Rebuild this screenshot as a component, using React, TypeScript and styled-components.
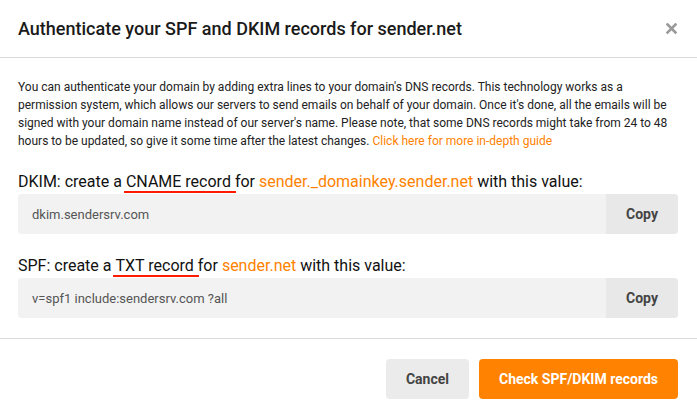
import React from "react";
import styled, { createGlobalStyle } from "styled-components";

const Global = createGlobalStyle`
  html, body { margin: 0; padding: 0; background: #fff; }
  body { font-family: Roboto, "Liberation Sans", Arial, sans-serif; color: #222; }
  * { box-sizing: border-box; }
`;

const Modal = styled.div`
  width: 697px;
  height: 417px;
  background: #fff;
  display: flex;
  flex-direction: column;
`;

const Header = styled.div`
  height: 58px;
  display: flex;
  align-items: center;
  justify-content: space-between;
  padding: 0 18px 1px 18px;
  border-bottom: 1px solid #d9d9d9;
`;

const Title = styled.h2`
  margin: 0;
  font-size: 18px;
  font-weight: 500;
  color: #1a1a1a;
`;

const Close = styled.button`
  border: 0;
  background: none;
  padding: 0;
  width: 14px;
  height: 14px;
  display: flex;
  align-items: center;
  justify-content: center;
  margin-right: 1px;
  cursor: pointer;
`;

const Body = styled.div`
  padding: 20px 19px 20px 18px;
  display: flex;
  flex-direction: column;
  border-bottom: 1px solid #d9d9d9;
`;

const Intro = styled.p`
  margin: 0 0 21px 0;
  font-size: 12px;
  line-height: 18px;
  color: #222;
`;

const Link = styled.a`
  color: #ff8200;
  text-decoration: none;
`;

const Section = styled.div<{ $gap?: number }>`
  display: flex;
  flex-direction: column;
  margin-top: ${(p) => p.$gap ?? 0}px;
`;

const Label = styled.div`
  font-size: 16px;
  line-height: 22px;
  color: #111;
  margin-bottom: 1px;
`;

const Marked = styled.span`
  border-bottom: 2px solid #ff1a00;
  padding: 0 5px 0 2px;
  margin-left: -2px;
  margin-right: -5px;
`;

const Accent = styled.span`
  color: #ff8200;
`;

const Field = styled.div`
  display: flex;
  height: 40px;
  border-radius: 4px;
  overflow: hidden;
  background: #f2f2f2;
`;

const Value = styled.div`
  flex: 1;
  display: flex;
  align-items: center;
  padding-left: 14px;
  font-size: 13px;
  color: #555;
`;

const CopyButton = styled.button`
  width: 72px;
  border: 0;
  background: #e8e8e8;
  font-family: inherit;
  font-size: 14px;
  font-weight: 700;
  color: #444;
  cursor: pointer;
`;

const Footer = styled.div`
  flex: 1;
  display: flex;
  justify-content: flex-end;
  align-items: flex-start;
  gap: 10px;
  padding: 20px 19px 0 18px;
`;

const Button = styled.button<{ $primary?: boolean }>`
  height: 40px;
  border: 0;
  border-radius: 4px;
  padding: 0 20px;
  font-family: inherit;
  font-size: 14px;
  font-weight: 700;
  background: ${(p) => (p.$primary ? "#ff8200" : "#ebebeb")};
  color: ${(p) => (p.$primary ? "#fff" : "#444")};
  cursor: pointer;
`;

export default function App() {
  return (
    <>
      <Global />
      <Modal>
        <Header>
          <Title>Authenticate your SPF and DKIM records for sender.net</Title>
          <Close aria-label="Close">
            <svg width="11" height="11" viewBox="0 0 11 11">
              <path d="M1.5 1.5 L9.5 9.5 M9.5 1.5 L1.5 9.5" stroke="#999" strokeWidth="2.6" strokeLinecap="square" />
            </svg>
          </Close>
        </Header>
        <Body>
          <Intro>
            You can authenticate your domain by adding extra lines to your domain's DNS records. This technology works as a
            permission system, which allows our servers to send emails on behalf of your domain. Once it's done, all the emails will be
            signed with your domain name instead of our server's name. Please note, that some DNS records might take from 24 to 48
            hours to be updated, so give it some time after the latest changes. <Link href="#">Click here for more in-depth guide</Link>
          </Intro>
          <Section>
            <Label>
              DKIM: create a <Marked>CNAME record</Marked> for <Accent>sender._domainkey.sender.net</Accent> with this value:
            </Label>
            <Field>
              <Value>dkim.sendersrv.com</Value>
              <CopyButton>Copy</CopyButton>
            </Field>
          </Section>
          <Section $gap={21}>
            <Label>
              SPF: create a <Marked>TXT record</Marked> for <Accent>sender.net</Accent> with this value:
            </Label>
            <Field>
              <Value>v=spf1 include:sendersrv.com ?all</Value>
              <CopyButton>Copy</CopyButton>
            </Field>
          </Section>
        </Body>
        <Footer>
          <Button>Cancel</Button>
          <Button $primary>Check SPF/DKIM records</Button>
        </Footer>
      </Modal>
    </>
  );
}
